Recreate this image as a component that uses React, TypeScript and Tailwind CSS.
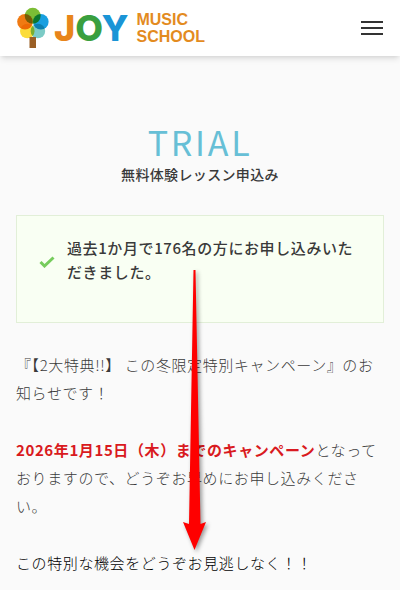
const TreeLogo = () => (
  <svg width="34" height="42" viewBox="0 0 34 42" className="isolate" aria-hidden="true">
    <circle cx="16.700" cy="8.800" r="8" fill="#7cbd35" className="mix-blend-multiply" />
    <circle cx="9" cy="14.800" r="7.800" fill="#f07a12" className="mix-blend-multiply" />
    <circle cx="24.800" cy="14.800" r="7.800" fill="#189fe0" className="mix-blend-multiply" />
    <circle cx="11.300" cy="24" r="7.300" fill="#fbdc3a" className="mix-blend-multiply" />
    <circle cx="21.900" cy="24" r="7.300" fill="#7ccbc6" className="mix-blend-multiply" />
    <rect x="13.500" y="30" width="6.500" height="11" fill="#9a5f25" />
  </svg>
)

const Header = () => (
  <header className="flex h-14 items-center justify-between bg-white px-4 shadow-md">
    <a href="#top" className="flex items-center font-['Liberation_Sans',sans-serif] font-bold tracking-normal">
      <TreeLogo />
      <span className="ml-1 font-['Inter',sans-serif] text-[36px] leading-none font-extrabold">
        <span className="text-[#e8851a]">J</span>
        <span className="text-[#3a9f3f]">O</span>
        <span className="text-[#1a94d6]">Y</span>
      </span>
      <span className="ml-2 text-base leading-[17px] text-[#e38b1f]">
        <span className="block">MUSIC</span>
        <span className="block">SCHOOL</span>
      </span>
    </a>
    <button type="button" aria-label="メニュー" className="flex w-6 flex-col items-center gap-1">
      <span className="h-0.5 w-[22px] bg-[#333]" />
      <span className="h-0.5 w-[22px] bg-[#333]" />
      <span className="h-0.5 w-[22px] bg-[#333]" />
    </button>
  </header>
)

const Notice = () => (
  <div className="mt-[31px] flex min-h-[108px] items-start border border-[#e2efd8] bg-[#f9fff3] px-[22px] py-5">
    <svg width="16" height="12" viewBox="0 0 16 12" className="mt-5 shrink-0" aria-hidden="true">
      <path d="M1.500 6L5.500 10L14.500 1.500" fill="none" stroke="#76cc5c" strokeWidth="3" />
    </svg>
    <p className="ml-3 font-medium">過去1か月で176名の方にお申し込みいただきました。</p>
  </div>
)

const Arrow = () => (
  <svg
    width="32"
    height="290"
    viewBox="0 0 32 290"
    className="pointer-events-none absolute top-[266px] left-[178px] drop-shadow-[2px_2px_2px_rgba(0,0,0,0.4)]"
    aria-hidden="true"
  >
    <path d="M15.500 4H17.500L22.500 258L28 256L16.500 284L5 256L11 258Z" fill="#fe0000" />
  </svg>
)

export default function App() {
  return (
    <div
      id="top"
      lang="ja"
      className="relative min-h-screen bg-[#fafafa] font-['Noto_Sans_CJK_JP',sans-serif] text-[15px] leading-6 tracking-[0.04em] text-[#3a3a3a]"
    >
      <Header />
      <main className="px-4 pt-16">
        <h1 className="text-center">
          <span className="block text-[34px] leading-[44px] tracking-[0.08em] text-[#67bfd6]">TRIAL</span>
          <span className="block text-sm font-medium tracking-wide">無料体験レッスン申込み</span>
        </h1>
        <Notice />
        <div className="mt-7 space-y-[29px] leading-7 font-light">
          <p>『【2大特典!!】 この冬限定特別キャンペーン』のお知らせです！</p>
          <p>
            <strong className="font-bold text-[#d91920]">2026年1月15日（木）までのキャンペーン</strong>
            となっておりますので、どうぞお早めにお申し込みください。
          </p>
          <p className="text-black">この特別な機会をどうぞお見逃しなく！！</p>
        </div>
      </main>
      <Arrow />
    </div>
  )
}
